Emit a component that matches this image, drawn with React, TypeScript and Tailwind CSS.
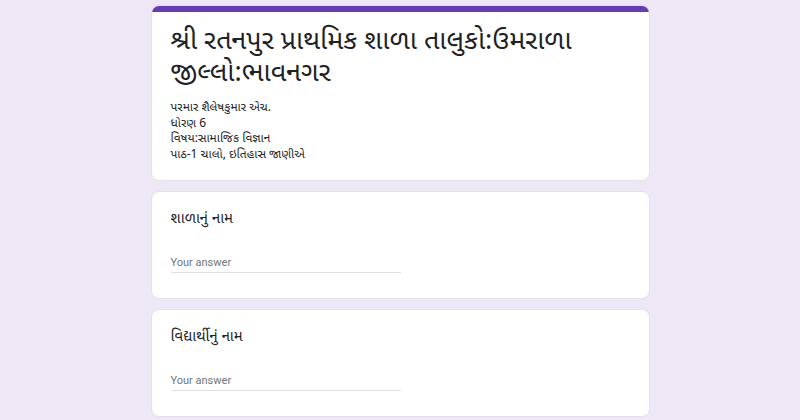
import React from "react";

const font = { fontFamily: '"Noto Sans Gujarati", "Noto Sans", Roboto, sans-serif' };

function Question({ title }: { title: string }) {
  return (
    <div className="shrink-0 bg-white rounded-[8px] border border-[#e4e0ec] px-[19px] pt-[17px] pb-[25px]">
      <div className="text-[15px] leading-[22px] text-[#202124]">{title}</div>
      <div className="mt-[25px] w-[230px] border-b border-[#e0e0e0] pb-[2px]">
        <div className="text-[11px] leading-[14px] text-[#70757a]" style={{ fontFamily: "Roboto, sans-serif" }}>
          Your answer
        </div>
      </div>
    </div>
  );
}

export default function App() {
  return (
    <div className="w-[800px] h-[420px] overflow-hidden bg-[#ede7f6] flex justify-center pt-[5px]" style={font}>
      <div className="w-[499px] flex flex-col gap-[10px]">
        <div className="shrink-0 bg-white rounded-[8px] border border-[#e4e0ec] overflow-hidden">
          <div className="h-[6px] bg-[#673ab7]" />
          <div className="px-[19px] pt-[15px] pb-[17px]">
            <div className="text-[27px] leading-[32px] text-[#202124]">
              શ્રી રતનપુર પ્રાથમિક શાળા તાલુકો:ઉમરાળા જીલ્લો:ભાવનગર
            </div>
            <div className="mt-[10px] text-[12px] leading-[15.5px] text-[#202124]">
              <div>પરમાર શૈલેષકુમાર એચ.</div>
              <div>ધોરણ 6</div>
              <div>વિષય:સામાજિક વિજ્ઞાન</div>
              <div>પાઠ-1 ચાલો, ઇતિહાસ જાણીએ</div>
            </div>
          </div>
        </div>
        <Question title="શાળાનું નામ" />
        <Question title="વિદ્યાર્થીનું નામ" />
      </div>
    </div>
  );
}
